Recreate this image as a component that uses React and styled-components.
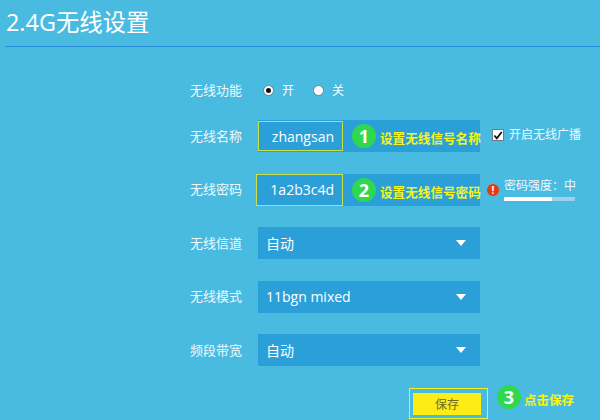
import React from "react";
import styled, { createGlobalStyle } from "styled-components";

const GlobalStyle = createGlobalStyle`
  html, body {
    margin: 0;
    padding: 0;
    background: #4abbe0;
  }
  body {
    font-family: "Open Sans", "Noto Sans CJK SC", sans-serif;
    color: #fff;
  }
`;

function App() {
  return (
    <Page>
      <GlobalStyle />
      <Header>
        <Title>2.4G无线设置</Title>
      </Header>
      <Form>
        <RadioRow>
          <Label>无线功能</Label>
          <RadioGroup>
            <RadioDot $checked />
            <RadioText>开</RadioText>
            <RadioDot />
            <RadioText>关</RadioText>
          </RadioGroup>
        </RadioRow>

        <Row>
          <Label>无线名称</Label>
          <Field>
            <Input $left={0}>zhangsan</Input>
            <Step>1</Step>
            <Hint>设置无线信号名称</Hint>
          </Field>
          <Broadcast>
            <CheckBox>
              <svg width="11" height="11" viewBox="0 0 11 11">
                <path d="M1.5 5.5 L4.2 8.6 L9.6 1.6" fill="none" stroke="#111" strokeWidth="2" />
              </svg>
            </CheckBox>
            <AsideText>开启无线广播</AsideText>
          </Broadcast>
        </Row>

        <Row>
          <Label>无线密码</Label>
          <Field>
            <Input $left={2}>1a2b3c4d</Input>
            <Step>2</Step>
            <Hint>设置无线信号密码</Hint>
          </Field>
          <Strength>
            <WarnDot>!</WarnDot>
            <StrengthInfo>
              <AsideText>密码强度：中</AsideText>
              <Meter>
                <MeterFill style={{ width: "67%" }} />
              </Meter>
            </StrengthInfo>
          </Strength>
        </Row>

        <Row>
          <Label>无线信道</Label>
          <Select>
            <span>自动</span>
            <Caret />
          </Select>
        </Row>
        <Row>
          <Label>无线模式</Label>
          <Select>
            <span>11bgn mixed</span>
            <Caret />
          </Select>
        </Row>
        <Row>
          <Label>频段带宽</Label>
          <Select>
            <span>自动</span>
            <Caret />
          </Select>
        </Row>

        <Footer>
          <SaveFrame>
            <SaveButton>保存</SaveButton>
          </SaveFrame>
          <FooterStep>3</FooterStep>
          <SaveHint>点击保存</SaveHint>
        </Footer>
      </Form>
    </Page>
  );
}

export default App;

const Page = styled.div`
  width: 600px;
  height: 420px;
  overflow: hidden;
  background: #4abbe0;
`;

const Header = styled.div`
  margin-left: 5px;
  height: 47px;
  border-bottom: 1px solid #2b8fdc;
  box-sizing: border-box;
`;

const Title = styled.div`
  font-size: 23.4px;
  line-height: 30px;
  padding-top: 7px;
  margin-left: 1px;
`;

const Form = styled.div`
  padding-left: 190px;
`;

const Row = styled.div`
  display: flex;
  align-items: center;
  height: 32px;
  margin-bottom: 21.5px;
`;

const RadioRow = styled(Row)`
  height: 20px;
  margin-top: 33px;
  margin-bottom: 20px;
`;

const Label = styled.div`
  width: 68px;
  flex: none;
  padding-bottom: 2px;
  font-size: 13px;
  color: #eef9fd;
`;

const RadioGroup = styled.div`
  display: flex;
  align-items: center;
  margin-left: 5px;
  font-size: 12px;
`;

const RadioDot = styled.span`
  width: 11px;
  height: 11px;
  border-radius: 50%;
  background: #fff;
  border: 1px solid #6d7f88;
  box-sizing: border-box;
  display: flex;
  align-items: center;
  justify-content: center;
  &::after {
    content: "";
    width: 5px;
    height: 5px;
    border-radius: 50%;
    background: ${(p) => (p.$checked ? "#111" : "transparent")};
  }
`;

const RadioText = styled.span`
  margin-left: 8px;
  margin-right: 19px;
`;

const Field = styled.div`
  display: flex;
  align-items: center;
  width: 222px;
  height: 32px;
  flex: none;
  background: #2ba0d8;
`;

const Input = styled.div`
  width: ${(p) => 85 + p.$left}px;
  height: ${(p) => 30 + p.$left}px;
  margin-left: ${(p) => -p.$left}px;
  flex: none;
  box-sizing: border-box;
  border: 1px solid #c9e04a;
  background: #2ba0d8;
  font-size: 14px;
  display: flex;
  align-items: center;
  justify-content: flex-end;
  padding-right: 8px;
`;

const Step = styled.span`
  width: 24px;
  height: 24px;
  flex: none;
  margin-left: 9px;
  border-radius: 50%;
  background: #2fd84f;
  color: #fff;
  font-size: 18px;
  font-weight: 700;
  display: flex;
  align-items: center;
  justify-content: center;
`;

const FooterStep = styled(Step)`
  margin-bottom: 12px;
`;

const Hint = styled.span`
  margin-left: 4px;
  margin-top: 3px;
  font-size: 12.6px;
  font-weight: 700;
  color: #f5f51a;
  white-space: nowrap;
`;

const Broadcast = styled.div`
  display: flex;
  align-items: center;
  margin-left: 12px;
  margin-bottom: 2px;
`;

const CheckBox = styled.span`
  width: 12px;
  height: 12px;
  flex: none;
  background: #fff;
  border: 1px solid #6d7f88;
  box-sizing: border-box;
  display: flex;
  align-items: center;
  justify-content: center;
`;

const AsideText = styled.span`
  margin-left: 5px;
  font-size: 12px;
  color: #eef9fd;
  white-space: nowrap;
  line-height: 16px;
`;

const Strength = styled.div`
  display: flex;
  align-items: center;
  margin-left: 7px;
`;

const WarnDot = styled.span`
  width: 12px;
  height: 12px;
  flex: none;
  border-radius: 50%;
  background: #e8380d;
  color: #fff;
  font-size: 10px;
  font-weight: 700;
  line-height: 12px;
  text-align: center;
`;

const StrengthInfo = styled.div`
  display: flex;
  flex-direction: column;
`;

const Meter = styled.div`
  width: 71px;
  height: 4px;
  margin: 3px 0 0 5px;
  background: #9bd2ea;
`;

const MeterFill = styled.div`
  height: 100%;
  background: #fff;
`;

const Select = styled.div`
  display: flex;
  align-items: center;
  justify-content: space-between;
  width: 222px;
  height: 32px;
  flex: none;
  box-sizing: border-box;
  padding: 0 14px 0 8px;
  background: #2ba0d8;
  font-size: 14px;
`;

const Caret = styled.span`
  width: 0;
  height: 0;
  border-left: 5px solid transparent;
  border-right: 5px solid transparent;
  border-top: 6px solid #fff;
`;

const Footer = styled.div`
  display: flex;
  align-items: center;
  height: 31px;
  margin-left: 219px;
  margin-top: 0.5px;
`;

const SaveFrame = styled.div`
  box-sizing: border-box;
  width: 79px;
  height: 31px;
  border: 1px solid #f5f01a;
  padding: 4px 6px 3px 3px;
  display: flex;
`;

const SaveButton = styled.div`
  flex: 1;
  background: #fdec16;
  color: #6d6a2a;
  font-size: 12px;
  display: flex;
  align-items: center;
  justify-content: center;
`;

const SaveHint = styled.span`
  margin-left: 3px;
  margin-bottom: 8px;
  font-size: 12.5px;
  font-weight: 700;
  color: #f5f51a;
  white-space: nowrap;
`;
